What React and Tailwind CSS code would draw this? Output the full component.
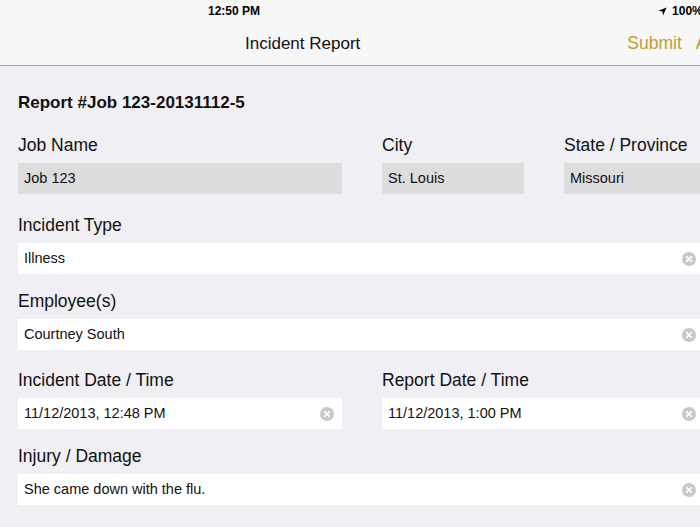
const font = { fontFamily: '"Liberation Sans", Arial, sans-serif' };

function ClearIcon() {
  return (
    <svg width="14" height="14" viewBox="0 0 14 14" className="shrink-0">
      <circle cx="7" cy="7" r="7" fill="#c8c8cc" />
      <path d="M4.6 4.6 L9.4 9.4 M9.4 4.6 L4.6 9.4" stroke="#fff" strokeWidth="1.6" strokeLinecap="round" />
    </svg>
  );
}

function Field({ label, value, width, readOnly }) {
  return (
    <div className="flex flex-col shrink-0" style={width ? { width } : undefined}>
      <div className="text-[17.5px] leading-[20px] text-[#111] h-[20px] mb-[9px] pt-[1px]">{label}</div>
      <div className={`h-[31px] flex items-center pl-[6px] pr-[8px] text-[14.5px] text-[#111] ${readOnly ? 'bg-[#dddddd]' : 'bg-white'}`}>
        <span className="flex-1 whitespace-nowrap">{value}</span>
        {!readOnly && <ClearIcon />}
      </div>
    </div>
  );
}

export default function App() {
  return (
    <div className="w-[700px] h-[527px] overflow-hidden bg-[#efeff4]" style={font}>
      <div className="w-[760px]">
        {/* status bar */}
        <div className="h-[22px] bg-[#f7f7f7] flex items-center text-[12px] font-bold text-black">
          <span className="ml-[208px]">12:50 PM</span>
          <svg width="9" height="9" viewBox="0 0 10 10" className="ml-[398px]">
            <path d="M9.5 0.5 L0.5 4.3 L5 5 L5.7 9.5 Z" fill="#000" />
          </svg>
          <span className="ml-[5px]">100%</span>
        </div>
        {/* nav bar */}
        <div className="h-[44px] bg-[#f7f7f7] border-b border-[#a9a9ad] flex items-center">
          <span className="ml-[245px] text-[17px] text-[#111]">Incident Report</span>
          <span className="ml-[267px] text-[17.5px] text-[#c29e2e]">Submit</span>
          <span className="ml-[14px] text-[17.5px] text-[#c29e2e]">Actions</span>
        </div>

        <div className="w-[704px] pl-[18px]">
          <div className="pt-[27px] text-[17px] leading-[20px] font-bold text-[#111]">Report #Job 123-20131112-5</div>

          <div className="flex gap-[40px] mt-[21px]">
            <Field label="Job Name" value="Job 123" width={324} readOnly />
            <Field label="City" value="St. Louis" width={142} readOnly />
            <Field label="State / Province" value="Missouri" width={142} readOnly />
          </div>

          <div className="mt-[20px]">
            <Field label="Incident Type" value="Illness" />
          </div>

          <div className="mt-[16px]">
            <Field label="Employee(s)" value="Courtney South" />
          </div>

          <div className="flex gap-[40px] mt-[19px]">
            <Field label="Incident Date / Time" value="11/12/2013, 12:48 PM" width={324} />
            <div className="flex-1">
              <Field label="Report Date / Time" value="11/12/2013, 1:00 PM" />
            </div>
          </div>

          <div className="mt-[16px]">
            <Field label="Injury / Damage" value="She came down with the flu." />
          </div>
        </div>
      </div>
    </div>
  );
}
